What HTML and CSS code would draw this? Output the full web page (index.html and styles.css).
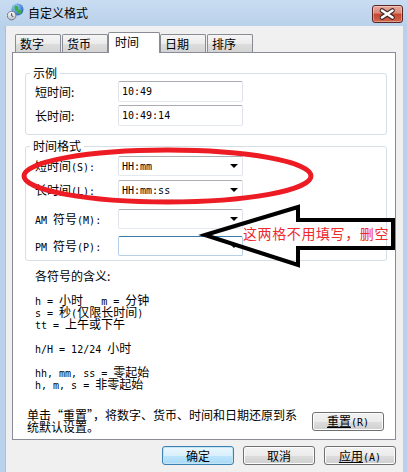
FILE: index.html
```html
<!DOCTYPE html>
<html lang="zh-CN">
<head>
  <meta charset="UTF-8">
  <title>自定义格式</title>
  <link rel="stylesheet" href="styles.css">
</head>
<body>
  <div class="window">
    <div class="titlebar">
      <svg class="app-icon" width="17" height="19" viewBox="0 0 17 19">
        <defs>
          <radialGradient id="sea" cx="0.35" cy="0.3" r="0.8">
            <stop offset="0" stop-color="#9fd4ff"/>
            <stop offset="1" stop-color="#1d5fbf"/>
          </radialGradient>
          <linearGradient id="dial" x1="0" y1="0" x2="0" y2="1">
            <stop offset="0" stop-color="#ffffff"/>
            <stop offset="1" stop-color="#b9bec6"/>
          </linearGradient>
        </defs>
        <circle cx="10.5" cy="6.5" r="6" fill="url(#sea)"/>
        <path d="M7 3.5c1.5-1 3-1 4 .3 .8 1-.5 2 .6 3 1 .9 2.5.3 3.4 1.2-.4 1.6-1.5 3-3 3.6-.3-1.2-1.4-1.6-1.2-3-.9-.7-2.4-.4-3-1.6-.5-1 .1-2.3-.8-3.5z" fill="#3fae3b"/>
        <circle cx="4.6" cy="12.6" r="4.3" fill="url(#dial)" stroke="#6d737c" stroke-width="0.9"/>
        <path d="M4.6 10.2v2.5l1.8 1" fill="none" stroke="#2b2f36" stroke-width="0.9"/>
      </svg>
      <span class="caption">自定义格式</span>
      <span class="close-btn">
        <svg width="31" height="18" viewBox="0 0 31 18">
          <path d="M10 5.5l10.5 7M20.5 5.5l-10.5 7" stroke="#3b2424" stroke-width="4.6" stroke-linecap="round"/>
          <path d="M10 5.5l10.5 7M20.5 5.5l-10.5 7" stroke="#ffffff" stroke-width="2.6" stroke-linecap="round"/>
        </svg>
      </span>
    </div>

    <div class="client">
      <ul class="tabs">
        <li class="tab">数字</li>
        <li class="tab">货币</li>
        <li class="tab active">时间</li>
        <li class="tab">日期</li>
        <li class="tab">排序</li>
      </ul>

      <div class="panel">
        <fieldset class="group sample">
          <legend>示例</legend>
          <div class="row">
            <label>短时间:</label>
            <div class="textbox"><code>10:49</code></div>
          </div>
          <div class="row">
            <label>长时间:</label>
            <div class="textbox"><code>10:49:14</code></div>
          </div>
        </fieldset>

        <fieldset class="group format">
          <legend>时间格式</legend>
          <div class="row">
            <label>短时间<code>(S):</code></label>
            <div class="combo"><code>HH:mm</code><i class="caret"></i></div>
          </div>
          <div class="row">
            <label>长时间<code>(L):</code></label>
            <div class="combo"><code>HH:mm:ss</code><i class="caret"></i></div>
          </div>
          <div class="row am">
            <label><code>AM </code>符号<code>(M):</code></label>
            <div class="combo"><i class="caret"></i></div>
          </div>
          <div class="row pm">
            <label><code>PM </code>符号<code>(P):</code></label>
            <div class="combo focus"><i class="caret"></i></div>
          </div>
        </fieldset>

        <div class="help">
          <div class="line">各符号的含义:</div>
          <div class="help-block">
            <div class="line"><code>h = </code>小时<code>   m = </code>分钟</div>
            <div class="line"><code>s = </code>秒<code>(</code>仅限长时间<code>)</code></div>
            <div class="line"><code>tt = </code>上午或下午</div>
          </div>
          <div class="help-block">
            <div class="line"><code>h/H = 12/24 </code>小时</div>
          </div>
          <div class="help-block">
            <div class="line"><code>hh, mm, ss = </code>零起始</div>
            <div class="line"><code>h, m, s = </code>非零起始</div>
          </div>
        </div>

        <div class="reset-row">
          <p class="note">单击“重置”，将数字、货币、时间和日期还原到系统默认设置。</p>
          <button class="btn reset"><u>重置</u><code>(R)</code></button>
        </div>
      </div>

      <div class="dlg-buttons">
        <button class="btn default">确定</button>
        <button class="btn">取消</button>
        <button class="btn"><u>应用</u><code>(A)</code></button>
      </div>
    </div>
  </div>

  <!-- hand-drawn markup on top of the screenshot -->
  <svg class="markup" width="407" height="472" viewBox="0 0 407 472">
    <ellipse cx="167.5" cy="176" rx="143.5" ry="26" fill="none" stroke="#ed1c24" stroke-width="5"/>
    <polygon points="205,235 298,207 298,220 393,220 393,248 298,248 298,265" fill="none" stroke="#000" stroke-width="4" stroke-linejoin="miter"/>
    <text x="243" y="239" class="markup-text">这两格不用填写，删空</text>
  </svg>
</body>
</html>
```

FILE: styles.css
```css
html, body {
  margin: 0;
  padding: 0;
}
body {
  position: relative;
  width: 407px;
  height: 472px;
  overflow: hidden;
  font-family: "Liberation Sans", "Noto Sans CJK SC", sans-serif;
  font-size: 12px;
  color: #000;
  background: #b9d1ea;
}
code {
  font-family: "DejaVu Sans Mono", "Noto Sans CJK SC", monospace;
  font-size: 10px;
  white-space: pre;
}

.window {
  height: 472px;
  display: flex;
  flex-direction: column;
  background: linear-gradient(#c9dcf2, #b9d1ea 26px, #b9d1ea);
}

.titlebar {
  height: 26px;
  display: flex;
  align-items: center;
  padding-left: 7px;
}
.app-icon {
  display: block;
  margin-top: -1px;
}
.caption {
  margin-left: 4px;
  font-family: "Noto Sans CJK SC", sans-serif;
  font-size: 12px;
  line-height: 14px;
}
.close-btn {
  margin-left: auto;
  margin-right: 4px;
  align-self: flex-start;
  margin-top: 5px;
  width: 31px;
  height: 18px;
  box-sizing: border-box;
  border: 1px solid #5a2424;
  border-radius: 3px;
  background: linear-gradient(#e9a99b, #d88878 45%, #c5452f 50%, #d2664c);
  box-shadow: inset 0 0 0 1px rgba(255,255,255,0.35);
}
.close-btn svg {
  display: block;
  margin: -1px;
}

.client {
  flex: 1;
  margin: 0 4px 0 5px;
  padding: 0 7px 0 6px;
  background: #f0f0f0;
  border-left: 1px solid #a9c0da;
}

.tabs {
  display: flex;
  align-items: flex-end;
  height: 26px;
  margin: 0 0 0 3px;
  padding: 0;
  list-style: none;
}
.tab {
  width: 46px;
  height: 18px;
  box-sizing: border-box;
  margin-right: 1px;
  padding-left: 4px;
  border: 1px solid #898c95;
  border-bottom: none;
  border-radius: 2px 2px 0 0;
  background: linear-gradient(#f5f5f5, #ebebeb 50%, #dddddd 51%, #d4d4d4);
  font-family: "Noto Sans CJK SC", sans-serif;
  line-height: 17px;
}
.tab.active {
  position: relative;
  z-index: 1;
  width: 52px;
  height: 21px;
  margin: 0 0 -1px -1px;
  padding-left: 6px;
  background: #fff;
  line-height: 17px;
}

.panel {
  width: 384px;
  height: 388px;
  box-sizing: border-box;
  border: 1px solid #898c95;
  background: #fff;
}

.group {
  margin: 12px 8px 0 12px;
  padding: 0 10px 8px 9px;
  border: 1px solid #d5dfe5;
  border-radius: 3px;
  min-width: 0;
}
.group legend {
  margin-left: -5px;
  padding: 0 3px;
  font-family: "Noto Sans CJK SC", sans-serif;
  font-size: 12px;
  line-height: 16px;
}
.format {
  margin-top: 3px;
  padding-top: 2px;
  padding-bottom: 4px;
}

.row {
  display: flex;
  align-items: center;
}
.row label {
  width: 83px;
  height: 14px;
  font-family: "Noto Sans CJK SC", sans-serif;
  line-height: 14px;
}
.row label code {
  line-height: 0;
}
.sample .row + .row {
  margin-top: 3px;
}
.format .row + .row {
  margin-top: 4px;
}
.format .row.am {
  margin-top: 9px;
}
.format .row.pm {
  margin-top: 7px;
}

.textbox,
.combo {
  width: 125px;
  height: 21px;
  box-sizing: border-box;
  display: flex;
  align-items: center;
  padding-left: 3px;
  border: 1px solid #e2e3ea;
  border-top-color: #abadb3;
  border-bottom-color: #e3e9ef;
  border-radius: 2px;
  background: #fff;
}
.combo {
  height: 20px;
}
.combo.focus {
  border-color: #b5cfe7;
  border-top-color: #3d7bad;
}
.caret {
  margin-left: auto;
  margin-right: 4px;
  width: 0;
  height: 0;
  border-top: 4px solid #000;
  border-left: 4px solid transparent;
  border-right: 4px solid transparent;
}

.help {
  margin: 9px 0 0 22px;
  font-family: "Noto Sans CJK SC", sans-serif;
  line-height: 12px;
}
.help .line {
  height: 12px;
  white-space: nowrap;
}
.help code {
  line-height: 0;
}
.help-block {
  margin-top: 12px;
}

.reset-row {
  display: flex;
  align-items: center;
  margin-top: 19px;
  padding: 0 11px 0 14px;
}
.note {
  width: 280px;
  height: 24px;
  margin: 0;
  font-family: "Noto Sans CJK SC", sans-serif;
  line-height: 12px;
}

.btn {
  width: 72px;
  height: 19px;
  box-sizing: border-box;
  padding: 0;
  border: 1px solid #707070;
  border-radius: 3px;
  background: linear-gradient(#f2f2f2, #ebebeb 50%, #dddddd 51%, #cfcfcf);
  box-shadow: inset 0 0 0 1px #fcfcfc;
  font-family: "Noto Sans CJK SC", sans-serif;
  font-size: 12px;
  line-height: 16px;
  color: #000;
}
.btn code {
  line-height: 0;
}
.btn u {
  text-decoration: underline;
  text-underline-offset: 1px;
}
.btn.reset {
  margin-left: auto;
}
.btn.default {
  border-color: #3c7fb1;
  background: linear-gradient(#eaf6fd, #d9f0fc 50%, #bee6fd 51%, #a7d9f5);
  box-shadow: inset 0 0 0 1px #c4e5f6;
}

.dlg-buttons {
  display: flex;
  justify-content: flex-end;
  gap: 9px;
  margin-top: 6px;
}

.markup {
  position: absolute;
  top: 0;
  left: 0;
  pointer-events: none;
}
.markup-text {
  font-family: "Noto Sans CJK SC", sans-serif;
  font-size: 14px;
  letter-spacing: 0.6px;
  fill: #ee2a2f;
}
```
